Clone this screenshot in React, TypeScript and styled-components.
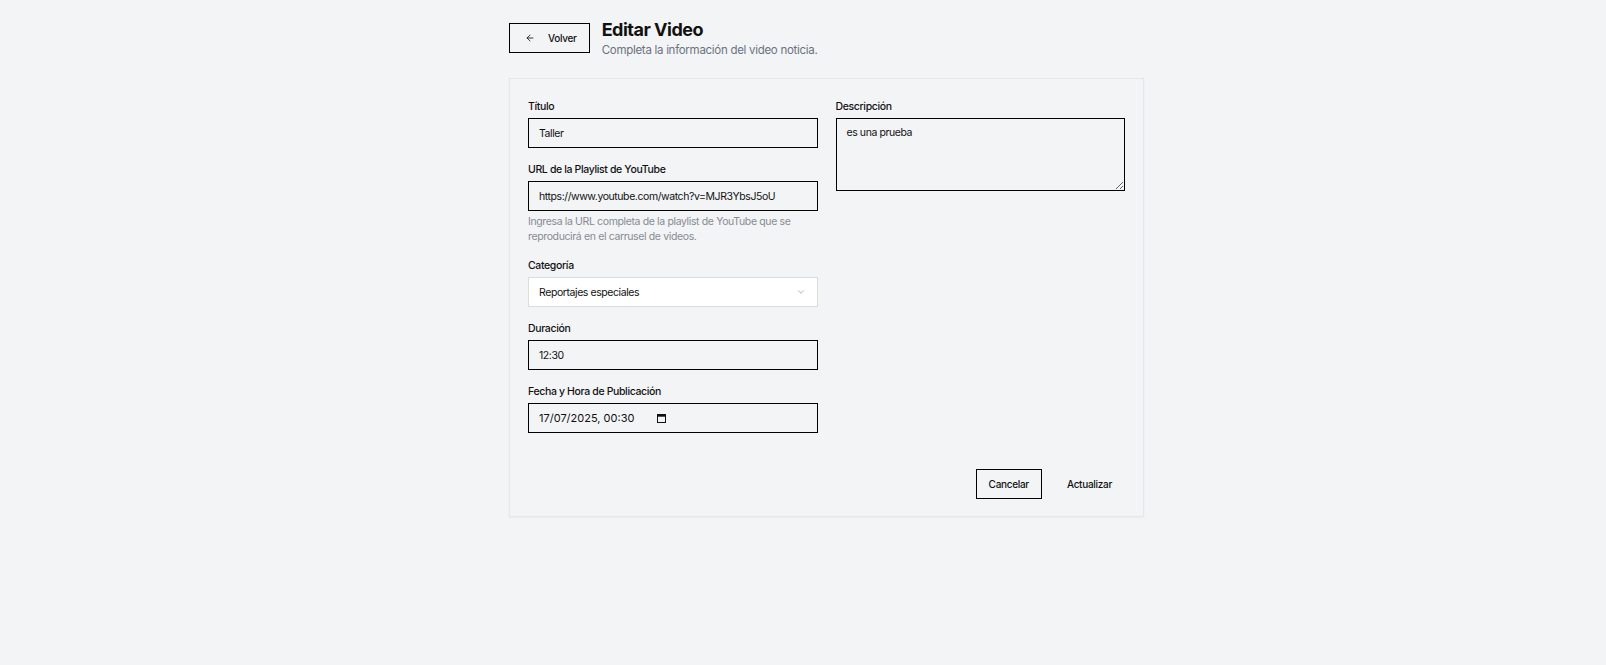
import React, { useState } from 'react';
import styled, { createGlobalStyle } from 'styled-components';
import { ArrowLeft, ChevronDown } from 'lucide-react';

const GlobalStyle = createGlobalStyle`
    html, body {
        margin: 0;
        padding: 0;
        background: #f3f4f6;
        font-family: Inter, "Noto Sans", "Liberation Sans", sans-serif;
        color: #111;
    }
`;

const Page = styled.div`
    display: flex;
    justify-content: center;
    padding: 18px 0 40px 47px;
    min-height: 665px;
    box-sizing: border-box;
`;

const Container = styled.div`
    width: 635px;
`;

const Header = styled.div`
    display: flex;
    align-items: center;
    gap: 12px;
    margin-bottom: 20px;
`;

const BackButton = styled.button`
    display: flex;
    align-items: center;
    gap: 13px;
    height: 30px;
    padding: 0 12px 0 15px;
    border: 1px solid #000;
    background: transparent;
    font-family: inherit;
    font-size: 10px;
    font-weight: 500;
    letter-spacing: -0.03em;
    color: #111;
    cursor: pointer;
`;

const Title = styled.h1`
    margin: 0;
    font-size: 18px;
    line-height: 24px;
    font-weight: 700;
    letter-spacing: -0.5px;
`;

const Subtitle = styled.p`
    margin: 0;
    font-size: 11.5px;
    line-height: 16px;
    letter-spacing: -0.025em;
    color: #6b7280;
`;

const Card = styled.form`
    border: 1px solid #e5e7eb;
    box-shadow: 0 1px 2px rgba(0, 0, 0, 0.04);
    padding: 19px 18px 17px;
`;

const Grid = styled.div`
    display: grid;
    grid-template-columns: 1fr 1fr;
    column-gap: 18px;
    align-items: start;
`;

const Column = styled.div`
    display: flex;
    flex-direction: column;
    gap: 13px;
`;

const Field = styled.div`
    display: flex;
    flex-direction: column;
`;

const Label = styled.label`
    font-size: 10.5px;
    line-height: 18px;
    font-weight: 500;
    letter-spacing: -0.034em;
    margin-bottom: 2px;
`;

const Input = styled.input`
    height: 30px;
    box-sizing: border-box;
    border: 1px solid #000;
    background: transparent;
    padding: 0 10px;
    font-family: inherit;
    font-size: 10.5px;
    letter-spacing: -0.04em;
    color: #111;
    outline: none;
`;

const TextArea = styled.textarea`
    height: 73px;
    box-sizing: border-box;
    border: 1px solid #000;
    background: transparent;
    padding: 7px 10px;
    font-family: inherit;
    font-size: 10.5px;
    letter-spacing: -0.04em;
    color: #111;
    outline: none;
    resize: vertical;
`;

const Helper = styled.p`
    margin: 3px 0 0;
    font-size: 10.5px;
    line-height: 15px;
    letter-spacing: -0.035em;
    color: #878b93;
`;

const SelectBox = styled.div`
    height: 30px;
    box-sizing: border-box;
    display: flex;
    align-items: center;
    justify-content: space-between;
    padding: 0 11px 0 10px;
    border: 1px solid #d9dce1;
    background: #fff;
    font-size: 10.5px;
    letter-spacing: -0.04em;
    color: #111;
`;

const DateBox = styled.div`
    height: 30px;
    box-sizing: border-box;
    display: flex;
    align-items: center;
    border: 1px solid #000;
    padding: 0 10px;
    font-size: 11px;
    color: #111;
`;

const DateText = styled.span`
    width: 118px;
`;

const Actions = styled.div`
    display: flex;
    justify-content: flex-end;
    gap: 12px;
    margin-top: 36px;
`;

const ActionButton = styled.button<{ $outlined?: boolean }>`
    height: 30px;
    padding: 0 12px;
    border: 1px solid ${p => (p.$outlined ? '#000' : 'transparent')};
    background: transparent;
    font-family: inherit;
    font-size: 10px;
    font-weight: 500;
    letter-spacing: -0.03em;
    color: #111;
    cursor: pointer;
`;

const CalendarIcon = () => (
    <svg width="9" height="9" viewBox="0 0 9 9" fill="none">
        <rect x="0.5" y="0.5" width="8" height="8" stroke="#111" />
        <rect x="0.5" y="0.5" width="8" height="2.2" fill="#111" />
    </svg>
);

const App = () => {
    const [titulo, setTitulo] = useState('Taller');
    const [url, setUrl] = useState('https://www.youtube.com/watch?v=MJR3YbsJ5oU');
    const [duracion, setDuracion] = useState('12:30');
    const [descripcion, setDescripcion] = useState('es una prueba');

    return (
        <>
            <GlobalStyle />
            <Page>
                <Container>
                    <Header>
                        <BackButton type="button">
                            <ArrowLeft size={10} strokeWidth={2} />
                            Volver
                        </BackButton>
                        <div>
                            <Title>Editar Video</Title>
                            <Subtitle>Completa la información del video noticia.</Subtitle>
                        </div>
                    </Header>

                    <Card onSubmit={e => e.preventDefault()}>
                        <Grid>
                            <Column>
                                <Field>
                                    <Label>Título</Label>
                                    <Input value={titulo} onChange={e => setTitulo(e.target.value)} />
                                </Field>
                                <Field>
                                    <Label>URL de la Playlist de YouTube</Label>
                                    <Input value={url} onChange={e => setUrl(e.target.value)} />
                                    <Helper>
                                        Ingresa la URL completa de la playlist de YouTube que se
                                        reproducirá en el carrusel de videos.
                                    </Helper>
                                </Field>
                                <Field>
                                    <Label>Categoría</Label>
                                    <SelectBox>
                                        <span>Reportajes especiales</span>
                                        <ChevronDown size={10} color="#9ca3af" />
                                    </SelectBox>
                                </Field>
                                <Field>
                                    <Label>Duración</Label>
                                    <Input value={duracion} onChange={e => setDuracion(e.target.value)} />
                                </Field>
                                <Field>
                                    <Label>Fecha y Hora de Publicación</Label>
                                    <DateBox>
                                        <DateText>17/07/2025, 00:30</DateText>
                                        <CalendarIcon />
                                    </DateBox>
                                </Field>
                            </Column>
                            <Column>
                                <Field>
                                    <Label>Descripción</Label>
                                    <TextArea value={descripcion} onChange={e => setDescripcion(e.target.value)} />
                                </Field>
                            </Column>
                        </Grid>
                        <Actions>
                            <ActionButton type="button" $outlined>Cancelar</ActionButton>
                            <ActionButton type="submit">Actualizar</ActionButton>
                        </Actions>
                    </Card>
                </Container>
            </Page>
        </>
    );
};

export default App;
